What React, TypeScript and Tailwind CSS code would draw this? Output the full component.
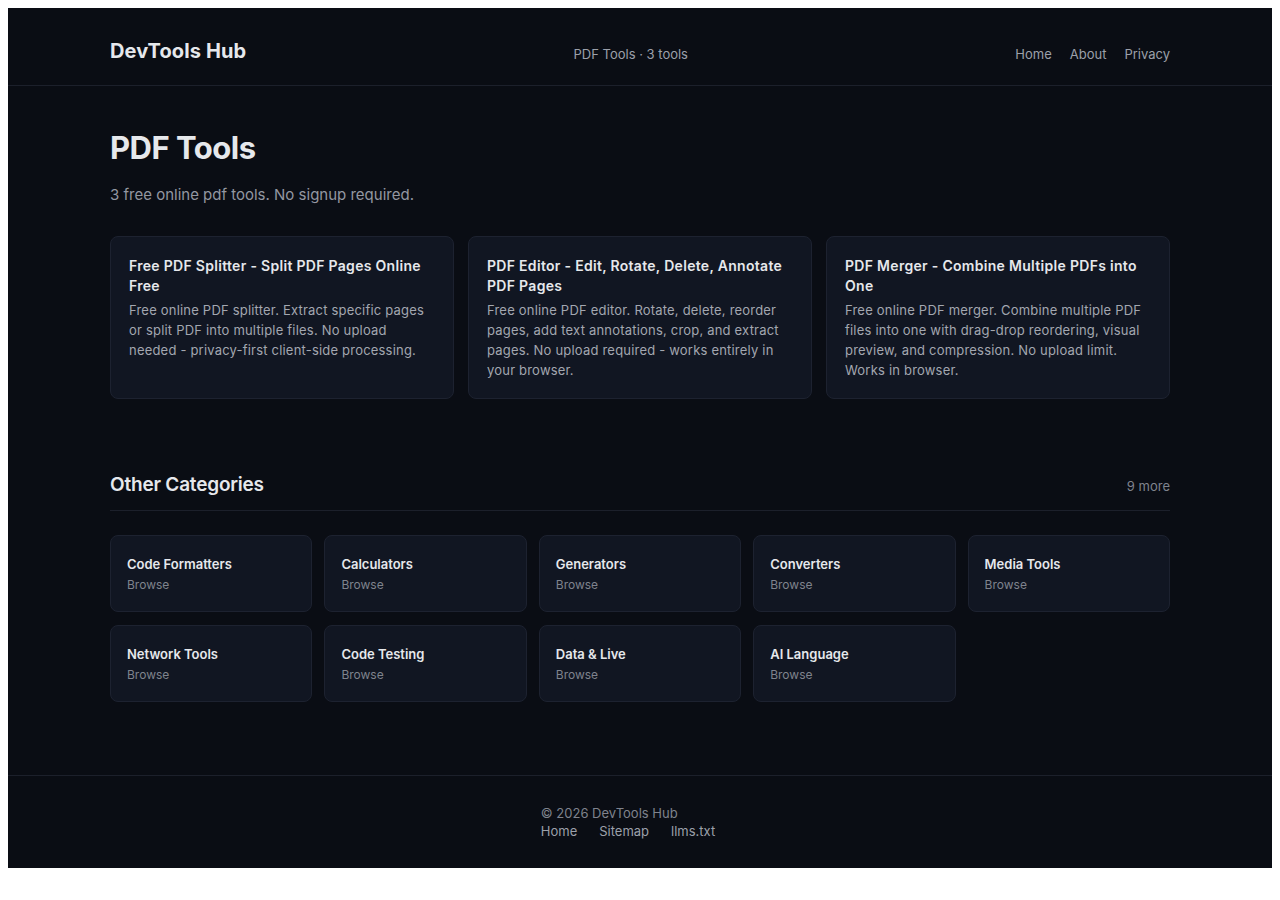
const tools = [
  {
    title: "Free PDF Splitter - Split PDF Pages Online Free",
    desc: "Free online PDF splitter. Extract specific pages or split PDF into multiple files. No upload needed - privacy-first client-side processing.",
  },
  {
    title: "PDF Editor - Edit, Rotate, Delete, Annotate PDF Pages",
    desc: "Free online PDF editor. Rotate, delete, reorder pages, add text annotations, crop, and extract pages. No upload required - works entirely in your browser.",
  },
  {
    title: "PDF Merger - Combine Multiple PDFs into One",
    desc: "Free online PDF merger. Combine multiple PDF files into one with drag-drop reordering, visual preview, and compression. No upload limit. Works in browser.",
  },
];

const categories = [
  "Code Formatters",
  "Calculators",
  "Generators",
  "Converters",
  "Media Tools",
  "Network Tools",
  "Code Testing",
  "Data & Live",
  "AI Language",
];

export default function App() {
  return (
    <div
      className="m-2 bg-[#0a0d14] text-[#e6e8ec]"
      style={{ fontFamily: "Inter, 'Noto Sans', sans-serif" }}
    >
      <header className="border-b border-[#1c202b]">
        <div className="mx-auto flex h-[77px] max-w-[1060px] items-center justify-between pt-[16px]">
          <a className="-mt-[8px] text-[20px] font-bold tracking-[0.1px] text-[#e6e8ec]">DevTools Hub</a>
          <span className="text-[13px] text-[#9ca0aa]">PDF Tools · 3 tools</span>
          <nav className="flex gap-[18px] text-[13px] text-[#9ca0aa]">
            <a>Home</a>
            <a>About</a>
            <a>Privacy</a>
          </nav>
        </div>
      </header>

      <main className="mx-auto max-w-[1060px] pb-[73px] pt-[42px]">
        <h1 className="text-[31px] font-bold leading-[40px] tracking-[-0.5px] text-[#e6e8ec]">PDF Tools</h1>
        <p className="mt-[15px] text-[15px] leading-[24px] text-[#9397a1]">
          3 free online pdf tools. No signup required.
        </p>

        <div className="mt-[29px] grid grid-cols-3 gap-[14px]">
          {tools.map((t) => (
            <div
              key={t.title}
              className="rounded-[8px] border border-[#1d2230] bg-[#111622] px-[18px] pb-[18px] pt-[19px]"
            >
              <h3 className="text-[14px] font-semibold leading-[20px] tracking-[0.3px] text-[#e6e8ec]">{t.title}</h3>
              <p className="mt-[4px] text-[13px] leading-[20px] tracking-[0.2px] text-[#a3a7b0]">{t.desc}</p>
            </div>
          ))}
        </div>

        <div className="mt-[72px] flex items-baseline justify-between border-b border-[#1c202b] pb-[10px]">
          <h2 className="text-[19px] font-semibold tracking-[-0.2px] text-[#e6e8ec]">Other Categories</h2>
          <span className="text-[13px] text-[#7f838d]">9 more</span>
        </div>

        <div className="mt-[24px] grid grid-cols-5 gap-[12px] gap-y-[13px]">
          {categories.map((c) => (
            <div
              key={c}
              className="h-[77px] rounded-[8px] border border-[#1d2230] bg-[#111622] px-[16px] pt-[18px]"
            >
              <div className="text-[13px] font-semibold leading-[20px] text-[#e6e8ec]">{c}</div>
              <div className="mt-[2px] text-[12px] leading-[18px] text-[#7f838d]">Browse</div>
            </div>
          ))}
        </div>
      </main>

      <footer className="flex justify-center border-t border-[#1c202b] pb-[28px] pt-[28px]">
        <div className="flex flex-col text-[13px] leading-[18px]">
          <span className="text-[#7f838d]">© 2026 DevTools Hub</span>
          <div className="flex text-[#9ca0aa]">
            <a className="mr-[22px]">Home</a>
            <a className="mr-[22px]">Sitemap</a>
            <a className="mr-[24px]">llms.txt</a>
          </div>
        </div>
      </footer>
    </div>
  );
}
